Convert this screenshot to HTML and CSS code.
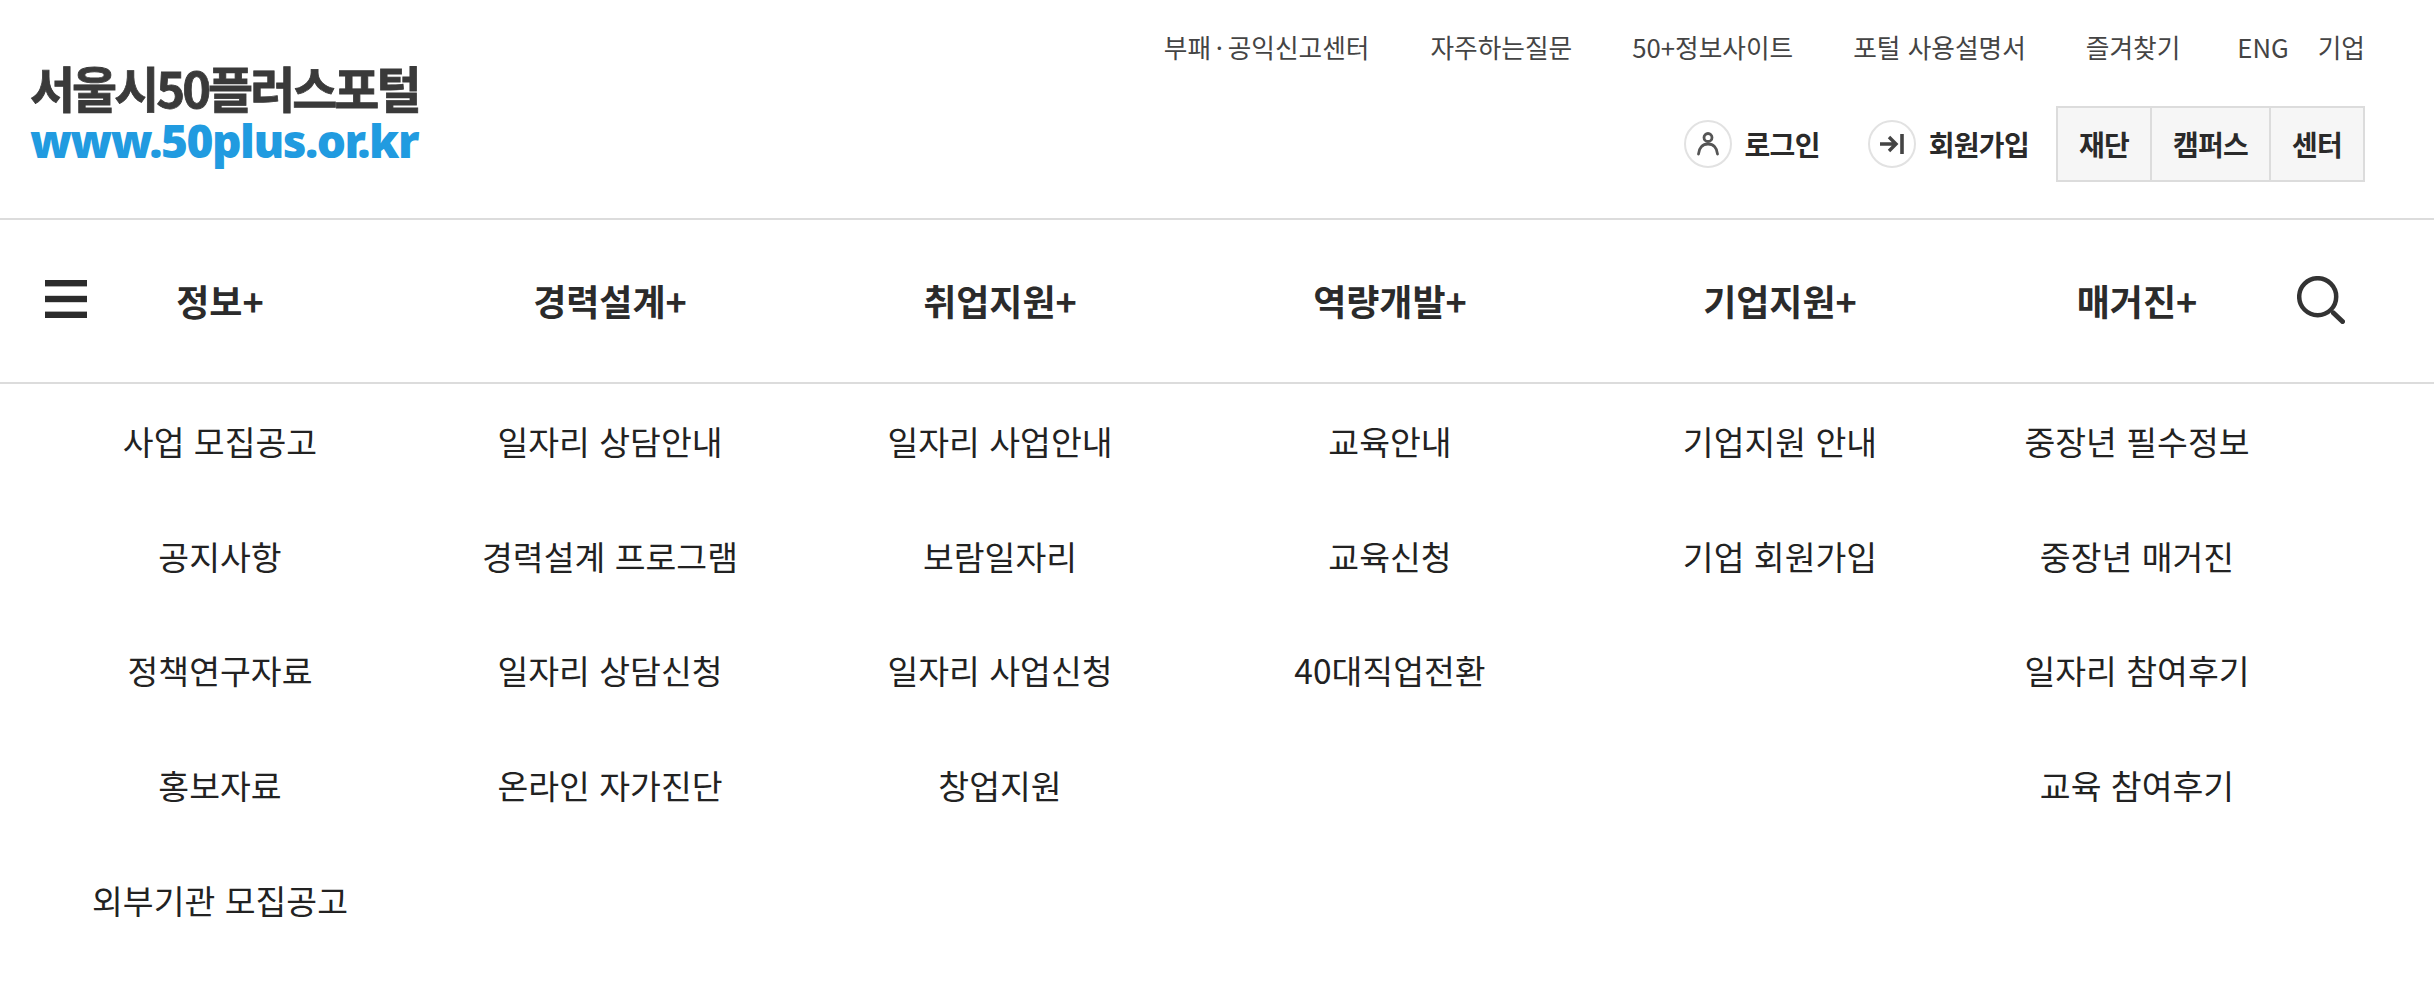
FILE: index.html
```html
<!DOCTYPE html>
<html lang="ko">
<head>
<meta charset="utf-8">
<title>서울시50플러스포털</title>
<link rel="stylesheet" href="styles.css">
</head>
<body>
<header class="top">
  <a class="logo">
    <span class="logo-name">서울시50플러스포털</span>
    <span class="logo-url">www.50plus.or.kr</span>
  </a>
  <div class="top-right">
    <ul class="util">
      <li class="report">부패 · 공익신고센터</li>
      <li>자주하는질문</li>
      <li>50+정보사이트</li>
      <li>포털 사용설명서</li>
      <li>즐겨찾기</li>
      <li class="eng">ENG</li>
      <li class="biz">기업</li>
    </ul>
    <div class="account">
      <a class="acct login">
        <span class="circle"><svg width="26" height="26" viewBox="0 0 26 26"><circle cx="13" cy="6.5" r="4" fill="none" stroke="#555" stroke-width="2.8"/><path d="M3.5 23c.5-6 4-10 9.500-10s9 4 9.500 10" fill="none" stroke="#555" stroke-width="2.8" stroke-linecap="round"/></svg></span>
        <span>로그인</span>
      </a>
      <a class="acct join">
        <span class="circle"><svg width="26" height="26" viewBox="0 0 26 26"><path d="M1 13h16M10 6l7 7-7 7" fill="none" stroke="#444" stroke-width="3.400"/><path d="M23 3v20" stroke="#444" stroke-width="3.600"/></svg></span>
        <span>회원가입</span>
      </a>
      <div class="tabs">
        <a class="tab t1">재단</a>
        <a class="tab t2">캠퍼스</a>
        <a class="tab t3">센터</a>
      </div>
    </div>
  </div>
</header>
<nav class="gnb">
  <svg class="burger" width="42" height="38" viewBox="0 0 42 38"><rect y="0" width="42" height="6.400" fill="#2b2b2b"/><rect y="15.800" width="42" height="6.400" fill="#2b2b2b"/><rect y="31.600" width="42" height="6.400" fill="#2b2b2b"/></svg>
  <ul class="gnb-row">
    <li>정보+</li>
    <li>경력설계+</li>
    <li>취업지원+</li>
    <li>역량개발+</li>
    <li>기업지원+</li>
    <li>매거진+</li>
  </ul>
  <svg class="search" width="48" height="48" viewBox="0 0 48 48"><circle cx="20.700" cy="20.700" r="18.500" fill="none" stroke="#333" stroke-width="4.500"/><path d="M36.500 37l9 8.500" stroke="#333" stroke-width="5" stroke-linecap="round"/></svg>
</nav>
<section class="sub">
  <ul class="col">
    <li>사업 모집공고</li><li>공지사항</li><li>정책연구자료</li><li>홍보자료</li><li>외부기관 모집공고</li>
  </ul>
  <ul class="col">
    <li>일자리 상담안내</li><li>경력설계 프로그램</li><li>일자리 상담신청</li><li>온라인 자가진단</li>
  </ul>
  <ul class="col">
    <li>일자리 사업안내</li><li>보람일자리</li><li>일자리 사업신청</li><li>창업지원</li>
  </ul>
  <ul class="col">
    <li>교육안내</li><li>교육신청</li><li>40대직업전환</li>
  </ul>
  <ul class="col">
    <li>기업지원 안내</li><li>기업 회원가입</li>
  </ul>
  <ul class="col">
    <li>중장년 필수정보</li><li>중장년 매거진</li><li>일자리 참여후기</li><li>교육 참여후기</li>
  </ul>
</section>
</body>
</html>
```
FILE: styles.css
```css
* { box-sizing: border-box; }
html, body { margin: 0; padding: 0; background: #fff; }
body { font-family: "Noto Sans CJK KR", "Noto Sans", sans-serif; color: #222; height: 982px; overflow: hidden; }
ul { list-style: none; margin: 0; padding: 0; }

.top { height: 218px; display: flex; justify-content: space-between; padding: 0 0 0 30px; }
.logo { display: flex; flex-direction: column; padding-top: 58px; width: 400px; }
.logo-name { font-size: 49px; font-weight: 700; line-height: 58px; letter-spacing: -3px; color: #3a3a3a; white-space: nowrap; -webkit-text-stroke: 0.8px #3a3a3a; }
.logo-url { font-size: 46px; font-weight: 900; line-height: 48px; letter-spacing: -1.5px; color: #219be0; white-space: nowrap; font-family: "Noto Sans", sans-serif; }

.top-right { display: flex; flex-direction: column; align-items: flex-end; padding-right: 69px; }
.util { display: flex; gap: 60px; padding-top: 28px; height: 106px; font-size: 25.700px; line-height: 38px; color: #444; white-space: nowrap; }
.util .report { word-spacing: -2.500px; margin-right: 1px; }
.util .eng { margin-left: -3px; }
.util .biz { margin-left: -31px; }

.account { display: flex; align-items: center; }
.acct { display: flex; align-items: center; font-size: 28px; font-weight: 700; letter-spacing: -0.7px; color: #2a2a2a; }
.login { margin-right: 48px; }
.join { margin-right: 27px; }
.circle { width: 48px; height: 48px; border-radius: 50%; border: 2px solid #e2e2e2; display: flex; align-items: center; justify-content: center; margin-right: 13px; }
.circle svg { display: block; }
.tabs { display: flex; height: 76px; border: 2px solid #dcdcdc; background: #f6f6f6; }
.tab { display: flex; align-items: center; justify-content: center; font-size: 28px; font-weight: 700; color: #2a2a2a; letter-spacing: -0.7px; border-left: 2px solid #dcdcdc; }
.t1 { width: 92px; border-left: 0; }
.t2 { width: 119px; }
.t3 { width: 94px; }

.gnb { position: relative; height: 166px; border-top: 2px solid #dcdcdc; border-bottom: 2px solid #dcdcdc; padding-left: 25px; }
.burger { position: absolute; left: 45px; top: 60px; }
.gnb-row { display: grid; grid-template-columns: repeat(5, 390px) 324px; height: 100%; }
.gnb-row li { display: flex; align-items: center; justify-content: center; padding-bottom: 2px; font-size: 36px; font-weight: 700; color: #2b2b2b; white-space: nowrap; }
.search { position: absolute; left: 2297px; top: 56px; }

.sub { display: grid; grid-template-columns: repeat(5, 390px) 324px; padding-left: 25px; margin-top: -1px; }
.col li { height: 114.7px; display: flex; align-items: center; justify-content: center; font-size: 33.500px; color: #222; white-space: nowrap; }
```
